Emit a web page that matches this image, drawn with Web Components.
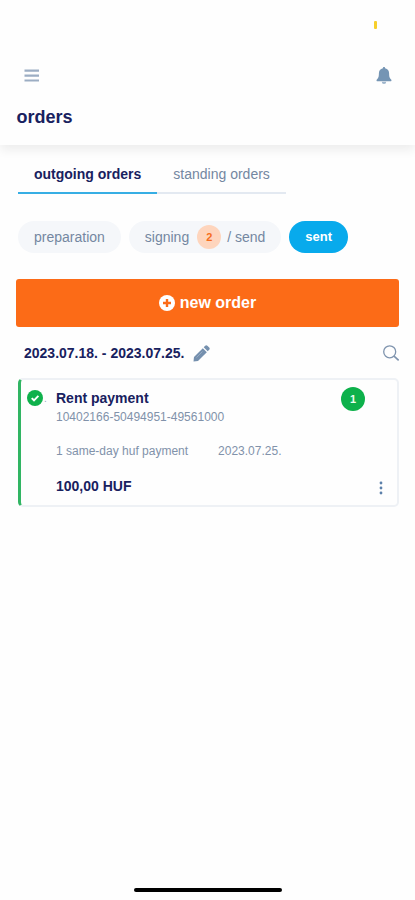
<!DOCTYPE html>
<html lang="en"><head><meta charset="utf-8"><title>orders</title>
<style>
html,body{margin:0;background:#fefefe}
body{font-family:"Liberation Sans",Arial,sans-serif;color:#18215f;width:415px;height:900px;overflow:hidden}
</style></head><body>
<orders-app></orders-app>
<script>
const define=(name,html)=>{
  const t=document.createElement('template');t.innerHTML=html;
  customElements.define(name,class extends HTMLElement{
    constructor(){super();this.attachShadow({mode:'open'}).append(t.content.cloneNode(true));}
  });
};
define('app-header',`<style>
:host{display:flex;flex-direction:column;box-sizing:border-box;height:145px;background:#fefefe;box-shadow:0 5px 10px 0 rgba(0,0,0,.07)}
.status{height:29px;display:flex;justify-content:flex-end;align-items:flex-end;padding-right:38px}
.status i{width:3px;height:8px;border-radius:1px;background:#f7cf2c}
.bar{display:flex;justify-content:space-between;align-items:center;height:34px;margin-top:30px;padding:0 23px 0 24px;box-sizing:border-box}
h1{font-size:18px;line-height:22px;margin:13px 0 0 16.5px;font-weight:bold}
svg{display:block}
</style>
<div class="status"><i></i></div>
<div class="bar">
<svg width="16" height="14" viewBox="0 0 16 14"><path d="M.5 1.700h14.500M.5 6.600h14.500M.5 11.500h14.500" stroke="#9cadc3" stroke-width="2.200"/></svg>
<svg width="16" height="18" viewBox="0 0 16 18"><path fill="#7595b4" d="M8 0c.7 0 1.1.5 1.1 1.2 2.6.5 4 2.5 4 5 0 4 .7 4.900 2 6.200.8.800.3 1.800-.6 1.800H1.500c-.9 0-1.400-1-.6-1.800 1.300-1.300 2-2.200 2-6.200 0-2.500 1.400-4.500 4-5C6.900.500 7.300 0 8 0Z"/><path fill="#9eb5cb" d="M5.800 14.700h4.400a2.200 2.200 0 0 1-4.400 0Z"/></svg>
</div><h1><slot></slot></h1>`);
define('nav-tab',`<style>
:host{display:block;box-sizing:border-box;height:34px;padding:6px 16px 0;font-size:14px;line-height:16px;color:#7487a1;border-bottom:2px solid #e3e9f1;white-space:nowrap}
:host([active]){color:#18215f;font-weight:bold;border-color:#36aee4}
</style><slot></slot>`);
define('filter-chip',`<style>
:host{display:flex;align-items:center;box-sizing:border-box;height:32px;padding:0 16px;border-radius:16px;background:#f5f7fa;color:#7487a1;font-size:14px;white-space:nowrap}
:host([active]){background:#08aaec;color:#fff;font-weight:bold;font-size:13px}
</style><slot></slot>`);
define('count-badge',`<style>
:host{display:flex;align-items:center;justify-content:center;width:24px;height:24px;border-radius:12px;background:#fed5bd;color:#f66d20;font-size:11px;font-weight:bold}
:host([done]){background:#0db14b;color:#eaffef}
</style><slot></slot>`);
define('primary-button',`<style>
:host{display:flex;align-items:center;justify-content:center;height:48px;border-radius:3px;background:#fc6b17;color:#fff;font-size:16px;font-weight:bold;gap:5px}
</style><svg width="16" height="16" viewBox="0 0 16 16"><circle cx="8" cy="8" r="8" fill="#fff"/><path d="M8 4v8M4 8h8" stroke="#fc6b17" stroke-width="2.400"/></svg><slot></slot>`);
define('date-filter',`<style>
:host{display:flex;align-items:center;height:24px;font-size:14px;font-weight:bold;white-space:nowrap}
.s{margin-left:auto}.p{margin-left:9px}
</style><slot></slot>
<svg class="p" width="17" height="17" viewBox="0 0 17 17" fill="#7590ae"><path d="M9.800 3.200 13.800 7.200 5 16 .5 16.500 1 12Z"/><path d="m10.700 2.300 1.500-1.500c.7-.7 1.500-.7 2.200 0l1.800 1.800c.7.700.7 1.500 0 2.200l-1.500 1.500Z"/><path d="m3.500 12.500 6-6" stroke="#9fb3c8" stroke-width=".8"/></svg>
<svg class="s" width="17" height="17" viewBox="0 0 17 17" fill="none" stroke="#7f94ae"><circle cx="7.700" cy="6.800" r="6" stroke-width="1.300"/><path d="m12 11.200 4.700 4.200" stroke-width="1.700"/></svg>`);
define('order-card',`<style>
:host{display:flex;box-sizing:border-box;height:129px;border:2px solid #eef1f5;border-left:3px solid #31b563;border-radius:5px;background:#fefefe}
.icon{display:flex;align-items:flex-start;gap:1px;width:35px;padding:10px 0 0 6px;box-sizing:border-box;font-size:10px;line-height:18px;color:#98a8bb}
.icon svg{display:block}
.body{display:flex;flex-direction:column;flex:1;min-width:0}
.row{display:flex;white-space:nowrap}
.title{font-size:14px;font-weight:bold;line-height:16px;margin-top:10px}
.small{font-size:12px;line-height:14px;color:#8192aa}
.acc{margin-top:4px}.info{margin-top:20px;gap:30px}
.sum{font-size:14px;font-weight:bold;line-height:16px;margin-top:20px}
.side{display:flex;flex-direction:column;justify-content:space-between;align-items:flex-end;padding:7px 14px 10px 0}
.side ::slotted(*){margin-right:18px}
</style>
<div class="icon"><svg width="16" height="16" viewBox="0 0 16 16"><circle cx="8" cy="8" r="8" fill="#0fb14c"/><path d="m4.700 8.100 2.300 2.200 4.400-4.400" fill="none" stroke="#fff" stroke-width="1.900"/></svg><span>.</span></div>
<div class="body"><div class="title"><slot name="title"></slot></div><div class="small acc"><slot name="account"></slot></div>
<div class="row small info"><slot name="kind"></slot><slot name="date"></slot></div><div class="sum"><slot name="amount"></slot></div></div>
<div class="side"><slot name="badge"></slot><svg width="4" height="14" viewBox="0 0 4 14" fill="#5c80aa"><circle cx="2" cy="2" r="1.400"/><circle cx="2" cy="7" r="1.400"/><circle cx="2" cy="12" r="1.400"/></svg></div>`);
define('home-indicator',`<style>:host{display:block;width:148px;height:4px;border-radius:2px;background:#000;margin:auto auto 8px}</style>`);
define('orders-app',`<style>
:host{display:flex;flex-direction:column;width:415px;height:900px}
main{display:flex;flex-direction:column;padding:0 16px}
nav{display:flex;margin:15px 0 0 2px}
.chips{display:flex;gap:8px;margin:26.5px 0 26.500px 2px}
.chips count-badge{margin:0 6px 0 8px}
date-filter{margin:14px 0 0 8px}
order-card{margin:13px 0 0 2px}
</style>
<app-header>orders</app-header>
<main>
<nav><nav-tab active>outgoing orders</nav-tab><nav-tab>standing orders</nav-tab></nav>
<div class="chips"><filter-chip>preparation</filter-chip><filter-chip><span>signing</span><count-badge>2</count-badge><span>/ send</span></filter-chip><filter-chip active>sent</filter-chip></div>
<primary-button>new order</primary-button>
<date-filter>2023.07.18. - 2023.07.25.</date-filter>
<order-card><span slot="title">Rent payment</span><span slot="account">10402166-50494951-49561000</span><span slot="kind">1 same-day huf payment</span><span slot="date">2023.07.25.</span><span slot="amount">100,00 HUF</span><count-badge done slot="badge">1</count-badge></order-card>
</main><home-indicator></home-indicator>`);
</script></body></html>
